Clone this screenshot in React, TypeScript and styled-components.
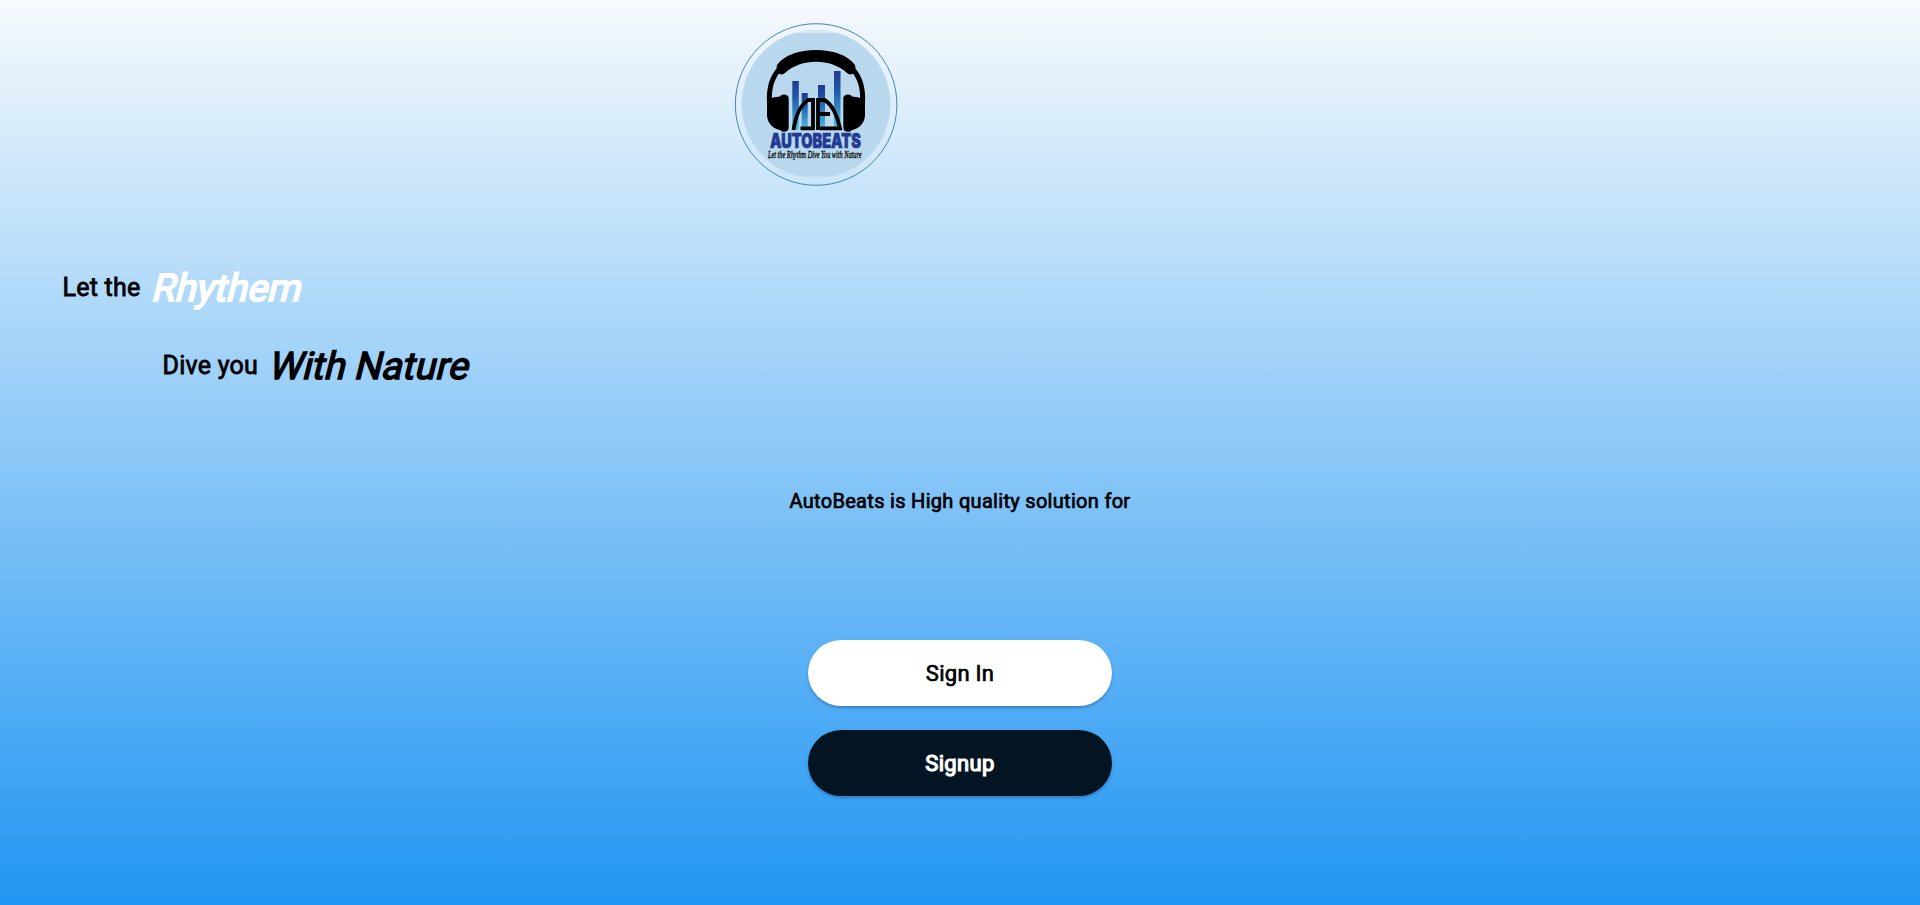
import React from 'react';
import styled, { createGlobalStyle } from 'styled-components';

const GlobalStyle = createGlobalStyle`
  body { margin: 0; }
  * { box-sizing: border-box; }
`;

const Page = styled.main`
  height: 905px;
  overflow: hidden;
  display: flex;
  flex-direction: column;
  align-items: center;
  font-family: Roboto, sans-serif;
  color: #000;
  background: linear-gradient(#f6fafc 0%, #2196f3 100%);
`;

const Avatar = styled.svg`
  display: block;
  width: 164px;
  height: 164px;
  margin: 22px 288px 0 0;
  overflow: visible;
  flex: none;
`;

const Slogan = styled.section`
  align-self: stretch;
  margin-top: 62px;
  display: flex;
  flex-direction: column;
`;

const Line = styled.p<{ $indent: number }>`
  margin: 0;
  height: 78px;
  padding-left: ${(p) => p.$indent}px;
  display: flex;
  align-items: center;
  white-space: pre;
`;

const Lead = styled.span`
  font-size: 25px;
  -webkit-text-stroke: 0.8px currentColor;
  letter-spacing: 0.25px;
`;

const Accent = styled.em<{ $light?: boolean }>`
  font-size: 38px;
  font-style: normal;
  margin-left: 13px;
  padding-top: 2px;
  transform: skewX(-14deg);
  color: ${(p) => (p.$light ? '#fff' : '#000')};
  -webkit-text-stroke: ${(p) => (p.$light ? 1.8 : 1.4)}px currentColor;
`;

const Tagline = styled.p`
  margin: 85px 0 0;
  font-size: 20px;
  line-height: 24px;
  letter-spacing: 0.3px;
  -webkit-text-stroke: 0.7px currentColor;
`;

const Actions = styled.div`
  margin-top: 127px;
  display: flex;
  flex-direction: column;
  gap: 24px;
`;

const Button = styled.button<{ $dark?: boolean }>`
  width: 303.5px;
  height: 66px;
  border: 0;
  padding: 0;
  border-radius: 33px;
  font: 400 22px Roboto, sans-serif;
  letter-spacing: ${(p) => (p.$dark ? 0.35 : 0.25)}px;
  background: ${(p) => (p.$dark ? '#031522' : '#fff')};
  color: ${(p) => (p.$dark ? '#fff' : '#000')};
  -webkit-text-stroke: ${(p) => (p.$dark ? 1.2 : 0.7)}px currentColor;
  box-shadow: 0 2px 3px rgba(0, 0, 0, 0.24);
`;

function Logo() {
  return (
    <Avatar viewBox="734 22 164 164">
      <defs>
        <linearGradient id="bar" x1="0" y1="0" x2="0" y2="1">
          <stop offset="0" stopColor="#20398f" />
          <stop offset="0.35" stopColor="#1f5ba8" />
          <stop offset="1" stopColor="#4fc0ea" />
        </linearGradient>
        <clipPath id="crop"><rect x="740" y="33" width="152" height="143.300" /></clipPath>
      </defs>
      <circle cx="816" cy="104" r="74.500" fill="#b9d8ed" opacity=".4" />
      <circle cx="816" cy="104" r="74.200" fill="#b9d8ed" clipPath="url(#crop)" />
      <circle cx="816.100" cy="104.500" r="80.800" fill="none" stroke="#3a80b8" strokeWidth=".95" />
      <g fill="url(#bar)">
        <rect x="792.300" y="81" width="6.500" height="49" />
        <rect x="801.700" y="93" width="6" height="37" />
        <rect x="818" y="85" width="7" height="45" />
        <rect x="834" y="71" width="6.500" height="59" />
      </g>
      <path d="M769.500 102c-1-16 3-26 11-34M862.500 102c1-16-3-26-11-34" fill="none" stroke="#000" strokeWidth="5" />
      <path d="M777 65c14-20 64-20 78 0 1 3 0 5-1 7-1 3-5 3-7 1-16-15-46-15-62 0-2 2-6 2-7-1-1-2-2-4-1-7z" />
      <path d="M767 101l6-3.500 7-1c1-3 8.700-3 8.700 2v29c0 5-6 5.500-8.700 2.500-8-1.500-13-8-13-15zM865 101l-6-3.500-7-1c-1-3-8.700-3-8.700 2v29c0 5 6 5.500 8.700 2.500 8-1.500 13-8 13-15z" />
      <path d="M793.500 130c2-14 7-25 14.500-30h5v28.300h-12.500M818 130v-30h6.500c7 4 13 15 15.500 28.300h-20M819 114h11" fill="none" stroke="#000" strokeWidth="3.800" />
      <text x="770" y="147.500" fontFamily="Inter, sans-serif" fontWeight="900" fontSize="19.500" textLength="91" lengthAdjust="spacingAndGlyphs" fill="#223a93" stroke="#223a93" strokeWidth=".7">AUTOBEATS</text>
      <text x="768" y="158" fontFamily="Liberation Serif, serif" fontStyle="italic" fontWeight="400" fontSize="10.200" stroke="#000" strokeWidth=".3" textLength="93.500" lengthAdjust="spacingAndGlyphs">Let the Rhythm Dive You with Nature</text>
    </Avatar>
  );
}

export default function App() {
  return (
    <>
      <GlobalStyle />
      <Page>
        <Logo />
        <Slogan>
          <Line $indent={62.5}><Lead>Let the</Lead><Accent $light>Rhythem</Accent></Line>
          <Line $indent={162.5}><Lead>Dive you</Lead><Accent>With Nature</Accent></Line>
        </Slogan>
        <Tagline>AutoBeats is High quality solution for</Tagline>
        <Actions>
          <Button>Sign In</Button>
          <Button $dark>Signup</Button>
        </Actions>
      </Page>
    </>
  );
}
